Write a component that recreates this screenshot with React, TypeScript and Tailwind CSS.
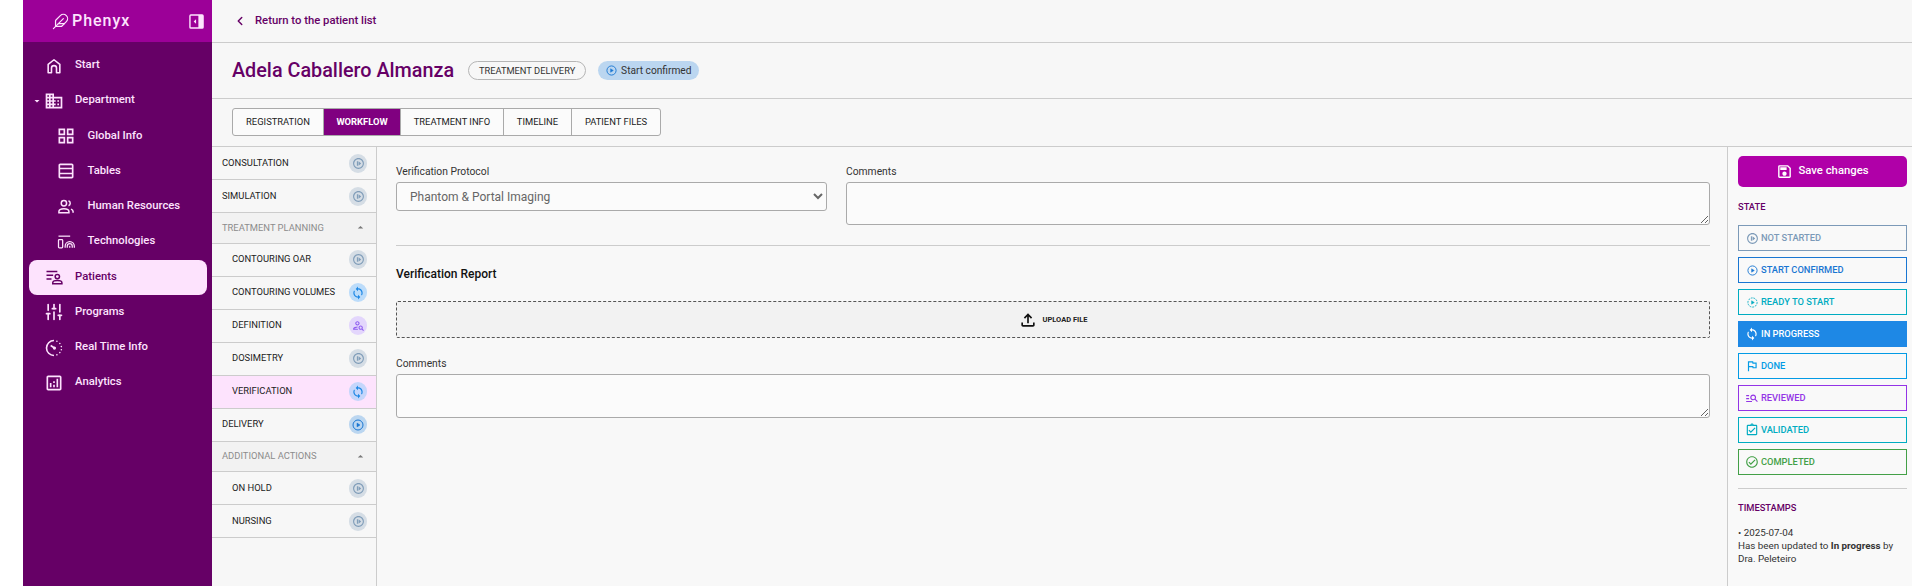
import React from 'react';
import { Feather, ChevronLeft, SlidersVertical } from 'lucide-react';
import {
  MdOutlineDomain,
  MdOutlineGridView,
  MdOutlineTableRows,
  MdOutlineAnalytics,
  MdOutlineFlag,
  MdOutlineCheckCircle,
  MdOutlineSave,
  MdOutlineFileUpload,
  MdOutlineAssignmentTurnedIn,
  MdOutlinePersonSearch,
  MdOutlineManageSearch,
  MdOutlineNotStarted,
  MdSync,
  MdArrowDropUp,
  MdArrowDropDown,
} from 'react-icons/md';

const font = { fontFamily: 'Roboto, sans-serif' };

type IconProps = { className?: string };

// play icon with a ring, used all over the workflow states
const PlayRing: React.FC<IconProps & { dashed?: boolean }> = ({ className, dashed }) => (
  <svg viewBox="0 0 24 24" fill="none" stroke="currentColor" strokeWidth="2" className={className}>
    <circle cx="12" cy="12" r="10" strokeDasharray={dashed ? '4 2' : undefined} />
    <path d="M10 8.2 16 12l-6 3.8z" fill="currentColor" strokeWidth="1" strokeLinejoin="round" />
  </svg>
);

const PanelToggle: React.FC<IconProps> = ({ className }) => (
  <svg viewBox="0 0 16 16" fill="none" className={className}>
    <rect x="1" y="1" width="14" height="14" rx="1" stroke="currentColor" strokeWidth="1.5" />
    <rect x="10" y="1" width="5" height="14" fill="currentColor" />
    <path d="M7.5 5.6v4.8L5 8z" fill="currentColor" />
  </svg>
);

const HomeIcon: React.FC<IconProps> = ({ className }) => (
  <svg viewBox="0 0 24 24" fill="none" stroke="currentColor" strokeWidth="1.9" strokeLinejoin="round" className={className}>
    <path d="M5 20V10l7-5.5L19 10v10h-4v-5.5a3 3 0 0 0-6 0V20z" />
  </svg>
);

const PeopleIcon: React.FC<IconProps> = ({ className }) => (
  <svg viewBox="0 0 24 24" fill="none" stroke="currentColor" strokeWidth="1.8" className={className}>
    <circle cx="9.5" cy="7.5" r="3.2" />
    <path d="M3.5 19v-1.6c0-2 2.6-3.4 6-3.4s6 1.4 6 3.4V19z" />
    <path d="M15 4.5a3.2 3.2 0 0 1 0 6M18 14.5c1.6.6 2.5 1.7 2.5 3V19" />
  </svg>
);

const FingerprintIcon: React.FC<IconProps> = ({ className }) => (
  <svg viewBox="0 0 24 24" fill="none" stroke="currentColor" strokeWidth="1.5" className={className}>
    <path d="M3 5h14" />
    <rect x="3" y="9" width="5" height="10" rx="1" />
    <path d="M11 19v-2a5.5 5.5 0 0 1 11 0v2M13.5 19v-2a3 3 0 0 1 6 0v2M16.5 19v-2.5" />
  </svg>
);

const PatientListIcon: React.FC<IconProps> = ({ className }) => (
  <svg viewBox="0 0 24 24" fill="none" stroke="currentColor" strokeWidth="1.8" className={className}>
    <path d="M3 5.5h13M3 10h8M3 14.5h6" />
    <circle cx="16" cy="11.5" r="2.6" />
    <path d="M10.5 20v-1.2c0-1.5 2.5-2.6 5.5-2.6s5.5 1.1 5.5 2.6V20z" />
  </svg>
);

const PaceIcon: React.FC<IconProps> = ({ className }) => (
  <svg viewBox="0 0 24 24" fill="none" stroke="currentColor" strokeWidth="1.9" className={className}>
    <path d="M12 3a9 9 0 1 0 0 18" />
    <path d="M15.5 3.8v.01M19 6.5v.01M20.8 10.3v.01M20.8 14v.01M19 17.5v.01M15.5 20.2v.01" strokeLinecap="round" />
    <path d="m8 9 4.5 3" />
    <circle cx="12.5" cy="12" r="1" fill="currentColor" />
  </svg>
);

const navItems = [
  { label: 'Start', icon: HomeIcon },
  { label: 'Department', icon: MdOutlineDomain, caret: true },
  { label: 'Global Info', icon: MdOutlineGridView, sub: true },
  { label: 'Tables', icon: MdOutlineTableRows, sub: true },
  { label: 'Human Resources', icon: PeopleIcon, sub: true },
  { label: 'Technologies', icon: FingerprintIcon, sub: true },
  { label: 'Patients', icon: PatientListIcon, active: true },
  { label: 'Programs', icon: SlidersVertical },
  { label: 'Real Time Info', icon: PaceIcon },
  { label: 'Analytics', icon: MdOutlineAnalytics },
];

const tabs = [
  { label: 'REGISTRATION', width: 'w-[90px]' },
  { label: 'WORKFLOW', width: 'w-[77px]' },
  { label: 'TREATMENT INFO', width: 'w-[103px]' },
  { label: 'TIMELINE', width: 'w-[68px]' },
  { label: 'PATIENT FILES', width: 'w-[89px]' },
];

type Step = { label: string; kind: 'idle' | 'sync' | 'review' | 'start' | 'group'; nested?: boolean; active?: boolean };

const steps: Step[] = [
  { label: 'CONSULTATION', kind: 'idle' },
  { label: 'SIMULATION', kind: 'idle' },
  { label: 'TREATMENT PLANNING', kind: 'group' },
  { label: 'CONTOURING OAR', kind: 'idle', nested: true },
  { label: 'CONTOURING VOLUMES', kind: 'sync', nested: true },
  { label: 'DEFINITION', kind: 'review', nested: true },
  { label: 'DOSIMETRY', kind: 'idle', nested: true },
  { label: 'VERIFICATION', kind: 'sync', nested: true, active: true },
  { label: 'DELIVERY', kind: 'start' },
  { label: 'ADDITIONAL ACTIONS', kind: 'group' },
  { label: 'ON HOLD', kind: 'idle', nested: true },
  { label: 'NURSING', kind: 'idle', nested: true },
];

const StepBadge: React.FC<{ kind: Step['kind']; active?: boolean }> = ({ kind, active }) => {
  if (kind === 'sync') {
    return (
      <span className={`w-[18px] h-[19px] rounded-full flex items-center justify-center ${active ? 'bg-[#c5d6fb]' : 'bg-[#bcdcfa]'}`}>
        <MdSync className="w-[14px] h-[14px] text-[#1e88e5]" />
      </span>
    );
  }
  if (kind === 'review') {
    return (
      <span className="w-[18px] h-[19px] rounded-full flex items-center justify-center bg-[#e3d6fc]">
        <MdOutlinePersonSearch className="w-[13px] h-[13px] text-[#8e5cf0]" />
      </span>
    );
  }
  if (kind === 'start') {
    return (
      <span className="w-[18px] h-[19px] rounded-full flex items-center justify-center bg-[#bbd6f0]">
        <PlayRing className="w-[12px] h-[12px] text-[#1976d2]" />
      </span>
    );
  }
  return (
    <span className="w-[18px] h-[19px] rounded-full flex items-center justify-center bg-[#d5dde5]">
      <MdOutlineNotStarted className="w-[13px] h-[13px] text-[#7f9cb8]" />
    </span>
  );
};

const states = [
  { label: 'NOT STARTED', cls: 'border-[#7c9ab8] text-[#7c9ab8]', icon: <MdOutlineNotStarted className="w-[13px] h-[13px] shrink-0" /> },
  { label: 'START CONFIRMED', cls: 'border-[#1976d2] text-[#1976d2]', icon: <PlayRing className="w-[11px] h-[11px] shrink-0" /> },
  { label: 'READY TO START', cls: 'border-[#00acc1] text-[#00acc1]', icon: <PlayRing dashed className="w-[11px] h-[11px] shrink-0" /> },
  { label: 'IN PROGRESS', cls: 'border-[#1e88e5] bg-[#1e88e5] text-white', icon: <MdSync className="w-[14px] h-[14px] shrink-0" /> },
  { label: 'DONE', cls: 'border-[#039be5] text-[#039be5]', icon: <MdOutlineFlag className="w-[14px] h-[14px] shrink-0" /> },
  { label: 'REVIEWED', cls: 'border-[#9334e6] text-[#9334e6]', icon: <MdOutlineManageSearch className="w-[14px] h-[14px] shrink-0" /> },
  { label: 'VALIDATED', cls: 'border-[#00acc1] text-[#00acc1]', icon: <MdOutlineAssignmentTurnedIn className="w-[14px] h-[14px] shrink-0" /> },
  { label: 'COMPLETED', cls: 'border-[#43a047] text-[#43a047]', icon: <MdOutlineCheckCircle className="w-[14px] h-[14px] shrink-0" /> },
];

export default function App() {
  return (
    <div className="h-screen flex overflow-hidden bg-white pl-[23px]" style={font}>
      <aside className="w-[189px] shrink-0 bg-[#660066] text-[#fde3fd] flex flex-col">
        <div className="h-[42px] bg-[#9c0098] flex items-center pl-[29px] pr-[8px] shrink-0">
          <Feather className="w-[17px] h-[17px]" strokeWidth={1.7} />
          <span className="ml-[3px] text-[16px] font-medium tracking-[0.06em]">Phenyx</span>
          <PanelToggle className="w-[15px] h-[15px] ml-auto" />
        </div>
        <nav className="flex flex-col pl-[6px] pr-[5px] pt-[6px]">
          {navItems.map((item) => {
            const Icon = item.icon;
            return (
              <div
                key={item.label}
                className={`relative h-[35.25px] flex items-center rounded-lg text-[11.3px] font-medium ${item.active ? 'bg-[#fde3fd] text-[#660066]' : ''} ${item.sub ? 'pl-[27px]' : 'pl-[14.5px]'}`}
              >
                {item.caret && <MdArrowDropDown className="absolute left-[2px] w-[12px] h-[12px]" />}
                <Icon className="w-[20px] h-[20px] shrink-0" />
                <span className="ml-[11.5px]">{item.label}</span>
              </div>
            );
          })}
        </nav>
      </aside>

      <main className="flex-1 min-w-0 flex flex-col bg-[#f7f7f7]">
        <div className="h-[43px] shrink-0 border-b border-[#cccccc] flex items-center pl-[21px] text-[#660066] text-[11.3px] font-medium">
          <ChevronLeft className="w-[14px] h-[14px]" strokeWidth={2.5} />
          <span className="ml-[8px]">Return to the patient list</span>
        </div>

        <div className="h-[56px] shrink-0 border-b border-[#cccccc] flex items-center pl-[20px]">
          <h1 className="text-[19.8px] font-medium text-[#660066]">Adela Caballero Almanza</h1>
          <span className="ml-[14px] h-[19px] w-[118px] rounded-full border border-[#b5b5b5] text-[9.3px] text-[#333333] flex items-center justify-center">
            TREATMENT DELIVERY
          </span>
          <span className="ml-[12px] h-[19px] w-[101px] rounded-full bg-[#bbd6f0] text-[10.2px] text-[#333333] flex items-center pl-[8px] gap-[4px]">
            <PlayRing className="w-[11px] h-[11px] text-[#1976d2]" />
            Start confirmed
          </span>
        </div>

        <div className="h-[48px] shrink-0 border-b border-[#cccccc] pl-[20px] pt-[9px]">
          <div className="inline-flex h-[28px] border border-[#aaaaaa] rounded-[3px] overflow-hidden text-[9.4px] text-[#222222] bg-[#fbfbfb]">
            {tabs.map((t, i) => (
              <div
                key={t.label}
                className={`${t.width} flex items-center justify-center ${i > 0 ? 'border-l border-[#aaaaaa]' : ''} ${t.label === 'WORKFLOW' ? 'bg-[#800080] text-white font-bold' : ''}`}
              >
                {t.label}
              </div>
            ))}
          </div>
        </div>

        <div className="flex-1 min-h-0 flex">
          <div className="w-[165px] shrink-0 border-r border-[#cccccc]">
            {steps.map((s) =>
              s.kind === 'group' ? (
                <div key={s.label} className="h-[30.5px] border-b border-[#cccccc] bg-[#f2f2f2] flex items-center pl-[10px] pr-[9px] text-[9.4px] text-[#8c8c8c]">
                  {s.label}
                  <MdArrowDropUp className="ml-auto w-[13px] h-[13px] text-[#777777]" />
                </div>
              ) : (
                <div
                  key={s.label}
                  className={`h-[33px] border-b border-[#cccccc] flex items-center pr-[9px] text-[9.4px] text-[#222222] ${s.nested ? 'pl-[20px]' : 'pl-[10px]'} ${s.active ? 'bg-[#fde3fd]' : ''}`}
                >
                  {s.label}
                  <span className="ml-auto">
                    <StepBadge kind={s.kind} active={s.active} />
                  </span>
                </div>
              ),
            )}
          </div>

          <div className="flex-1 min-w-0 bg-[#f8f8f8] pl-[19px] pr-[17px] pt-[18px]">
            <div className="flex gap-[19px] pb-[20px] border-b border-[#cccccc]">
              <div className="w-[431px] shrink-0">
                <label className="block text-[10.3px] leading-[13px] text-[#333333] mb-[4px]">Verification Protocol</label>
                <select className="w-full h-[29px] pl-[9px] pr-[2px] text-[12px] text-[#666666] bg-[#fbfbfb] border border-[#aaaaaa] rounded-[3px]" style={font}>
                  <option>Phantom &amp; Portal Imaging</option>
                </select>
              </div>
              <div className="flex-1 min-w-0">
                <label className="block text-[10.3px] leading-[13px] text-[#333333] mb-[4px]">Comments</label>
                <textarea className="block w-full h-[43px] bg-[#fbfbfb] border border-[#aaaaaa] rounded-[3px]" />
              </div>
            </div>

            <h2 className="mt-[20px] text-[12px] leading-[16px] font-medium text-[#111111]">Verification Report</h2>

            <div className="mt-[19px] h-[37px] border border-dashed border-[#555555] rounded-[2px] bg-[#f2f2f2] flex items-center justify-center gap-[4px]">
              <MdOutlineFileUpload className="w-[20px] h-[20px] text-[#111111]" />
              <span className="text-[7.5px] font-bold text-[#222222]">UPLOAD FILE</span>
            </div>

            <label className="block mt-[19px] text-[10.3px] leading-[13px] text-[#333333] mb-[4px]">Comments</label>
            <textarea className="block w-full h-[44px] bg-[#fbfbfb] border border-[#aaaaaa] rounded-[3px]" />
          </div>

          <div className="w-[185px] shrink-0 border-l border-[#cccccc] bg-[#f9f9f9] pl-[10px] pr-[5px] pt-[9px]">
            <button className="w-full h-[31px] rounded-[5px] bg-[#b000a8] text-white text-[11.3px] font-medium flex items-center justify-center gap-[5px]">
              <MdOutlineSave className="w-[17px] h-[17px]" />
              Save changes
            </button>
            <div className="mt-[13px] text-[9.3px] leading-[13px] font-medium text-[#660066]">STATE</div>
            <div className="mt-[12px] flex flex-col gap-[6px]">
              {states.map((st) => (
                <div key={st.label} className={`h-[26px] border flex items-center pl-[7px] gap-[3px] text-[9.3px] font-medium ${st.cls}`}>
                  <span className="w-[12px] flex justify-center">{st.icon}</span>
                  {st.label}
                </div>
              ))}
            </div>
            <div className="mt-[13px] border-t border-[#cccccc]" />
            <div className="mt-[12px] text-[9.3px] leading-[13px] font-medium text-[#660066]">TIMESTAMPS</div>
            <div className="mt-[12px] text-[9.8px] leading-[13px] text-[#333333]">
              <div>• 2025-07-04</div>
              <div>
                Has been updated to <b className="font-bold">In progress</b> by
              </div>
              <div>Dra. Peleteiro</div>
            </div>
          </div>
        </div>
      </main>
    </div>
  );
}
